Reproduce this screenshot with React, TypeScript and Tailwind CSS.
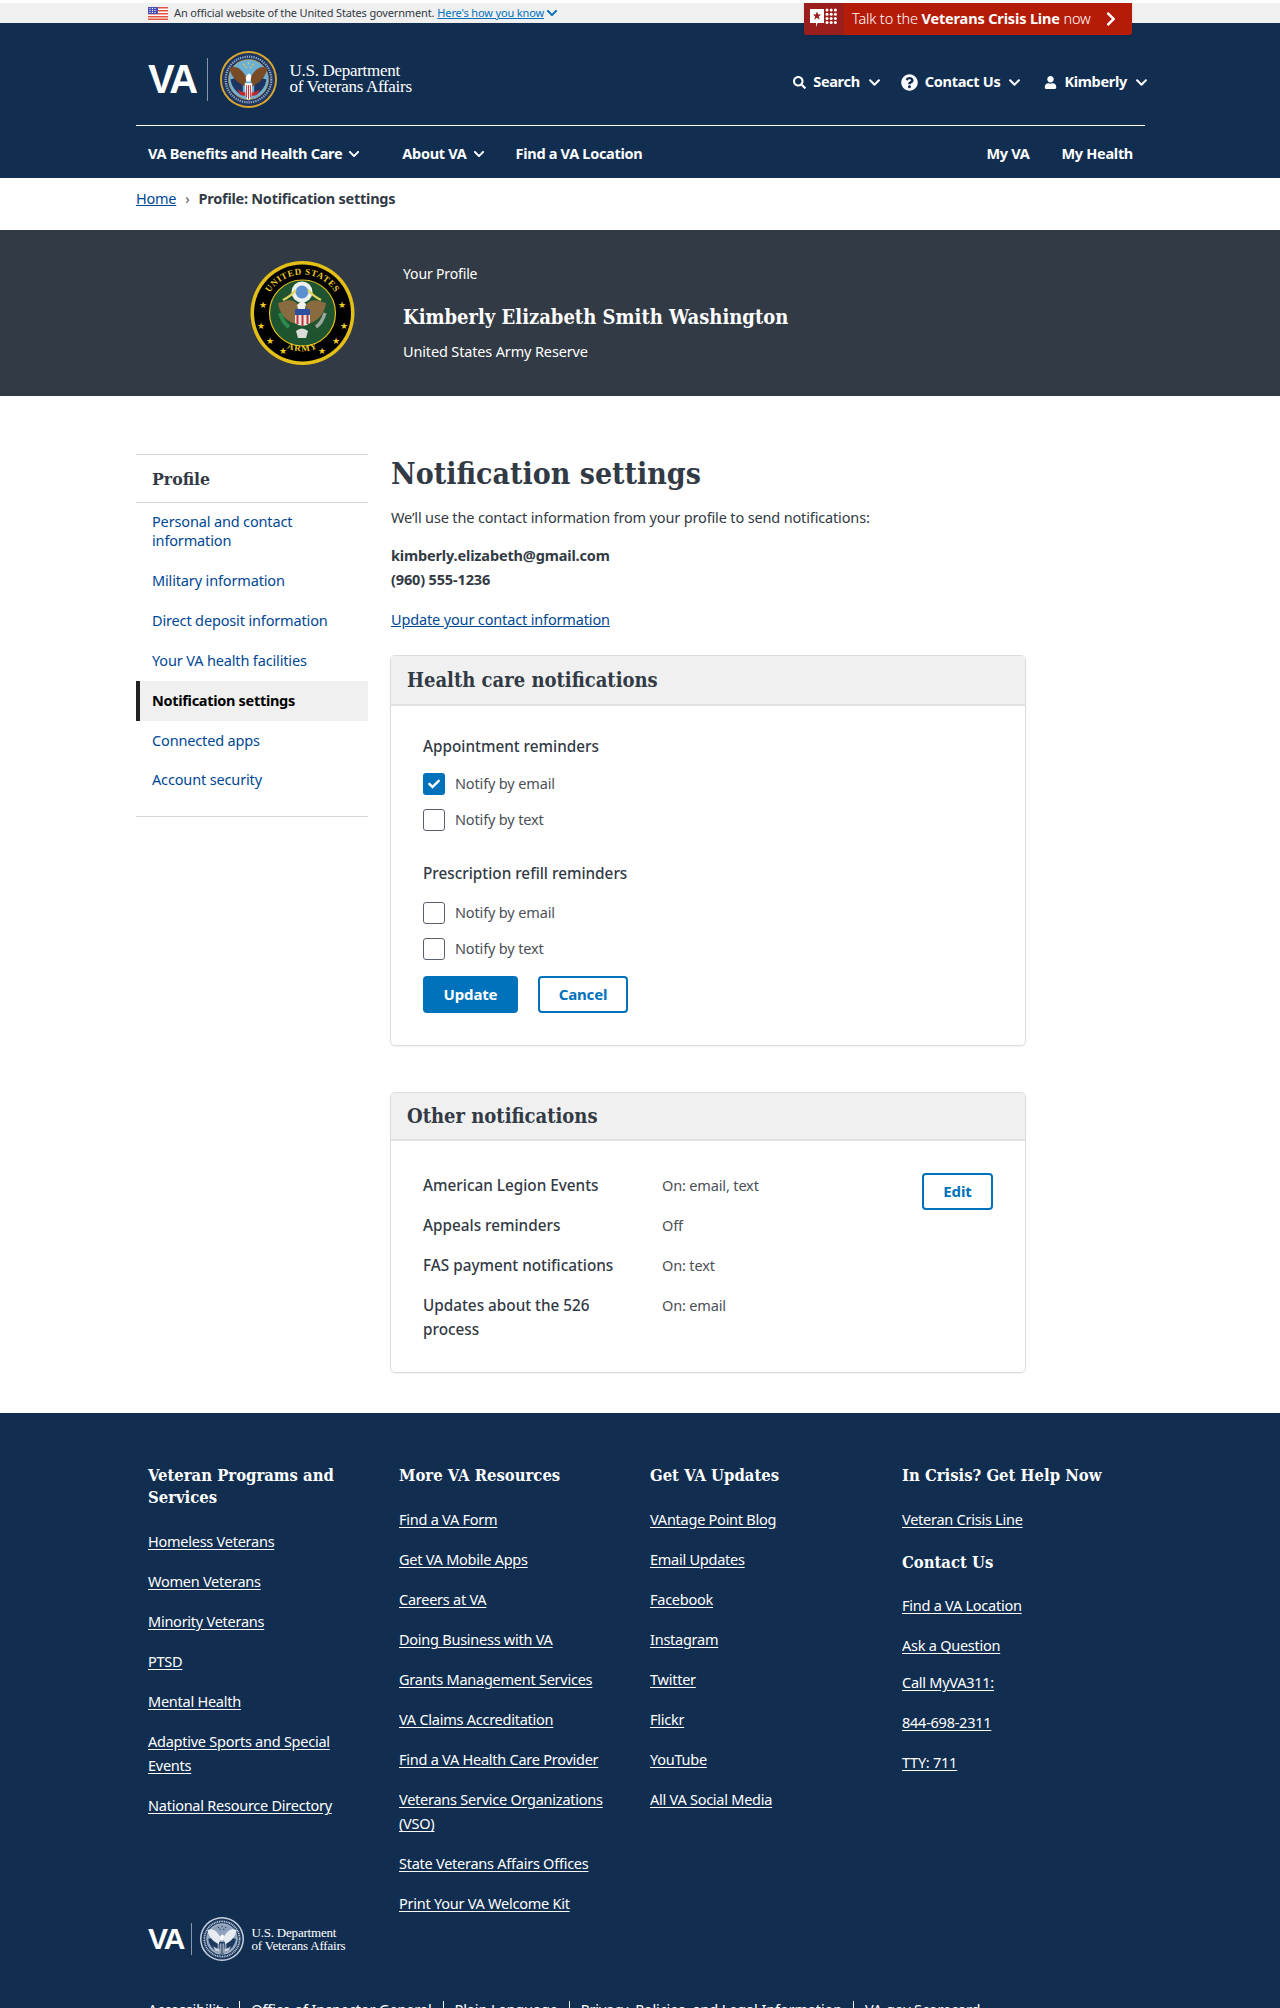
import React from 'react';
import { FaChevronDown, FaChevronRight, FaSearch, FaQuestionCircle, FaUser, FaCheck } from 'react-icons/fa';

const serif = "font-['DejaVu_Serif_Condensed','DejaVu_Serif',serif]";

const Flag = () => (
  <svg width="20" height="13" viewBox="0 0 20 13" className="shrink-0">
    <rect width="20" height="13" fill="#fff" />
    <rect y="0" width="20" height="1.5" fill="#e2563f" />
    <rect y="3" width="20" height="1.5" fill="#e2563f" />
    <rect y="6" width="20" height="1.5" fill="#e2563f" />
    <rect y="9" width="20" height="1.5" fill="#e2563f" />
    <rect y="11.5" width="20" height="1.5" fill="#e2563f" />
    <rect width="10" height="7" fill="#4a4fb5" />
    <path d="M1.5 1.5h1M4 1.5h1M6.5 1.5h1M1.5 3.5h1M4 3.5h1M6.5 3.5h1M1.5 5.5h1M4 5.5h1M6.5 5.5h1" stroke="#fff" strokeWidth="1" />
  </svg>
);

const VaSeal = ({ size, mono }: { size: number; mono?: boolean }) => {
  const c = mono
    ? { ring: '#c9d1dc', dark: '#1c3a60', mid: '#8fa2ba', wing: '#e6ebf1', head: '#ffffff', red: '#c9d1dc', shield: '#1c3a60' }
    : { ring: '#d9a62e', dark: '#1d3560', mid: '#6cb0d6', wing: '#7a4a24', head: '#ffffff', red: '#c2272d', shield: '#ffffff' };
  return (
    <svg width={size} height={size} viewBox="0 0 60 60" className="shrink-0">
      <circle cx="30" cy="30" r="30" fill={c.ring} />
      <circle cx="30" cy="30" r="28" fill={c.dark} />
      <circle cx="30" cy="30" r="24" fill="none" stroke={mono ? c.ring : '#8ea3bd'} strokeWidth="2.4" strokeDasharray="1.4 1" />
      <circle cx="30" cy="30" r="21" fill={c.mid} stroke={c.ring} strokeWidth="0.7" />
      <path d="M11 30 L24 26 L24 47 Q13 42 11 30Z M49 30 L36 26 L36 47 Q47 42 49 30Z" fill={c.dark} />
      <path d="M28 28 C22 17 16 15 10 18 C12 27 17 33 26 37Z M32 28 C38 17 44 15 50 18 C48 27 43 33 34 37Z" fill={c.wing} />
      <path d="M27 28 q3-7 6-2 l-1 6h-4z" fill={c.head} />
      <path d="M18 40 q6 5 12 3 q6 2 12-3 l-3 6 q-9 3-18 0z" fill={c.red} />
      <path d="M26 34h8l-1 13q-1 4-3 5q-2-1-3-5z" fill={c.shield} />
      <path d="M28 36v13M30 36v15M32 36v13" stroke={c.red} strokeWidth="1" />
      <path d="M25 13l1 1.8-1 .6-1-.6zM35 13l1 1.8-1 .6-1-.6zM30 11.5l1 1.8-1 .6-1-.6zM27.5 15.5l1 1.8-1 .6-1-.6zM32.5 15.5l1 1.8-1 .6-1-.6z" fill={mono ? c.dark : '#f1c644'} />
    </svg>
  );
};

const ArmySeal = () => {
  const stars: [number, number][] = [[-36, -8], [-38, 12], [-30, 26], [-18, 36], [18, 36], [30, 26], [38, 12], [36, -8]];
  return (
    <svg width="105" height="104" viewBox="0 0 105 104" className="shrink-0">
      <circle cx="52.5" cy="52" r="52" fill="#e3bf17" />
      <circle cx="52.5" cy="52" r="48.5" fill="#000" />
      <circle cx="52.5" cy="52" r="33" fill="#1e5530" stroke="#e3bf17" strokeWidth="1.2" />
      {stars.map(([x, y], i) => (
        <text key={i} x={52.5 + x * 1.1} y={55 + y * 1.06} fontSize="9" fill="#f0cc20" textAnchor="middle">★</text>
      ))}
      <defs>
        <path id="armyTop" d="M14 52 A38.5 38.5 0 0 1 91 52" />
        <path id="armyBot" d="M18 70 A39.5 39.5 0 0 0 87 70" />
      </defs>
      <text fontSize="9" fontWeight="700" fill="#e8c92a" fontFamily="Liberation Serif, serif" letterSpacing="0.6">
        <textPath href="#armyTop" startOffset="50%" textAnchor="middle">UNITED STATES</textPath>
      </text>
      <text fontSize="9" fontWeight="700" fill="#e8c92a" fontFamily="Liberation Serif, serif" letterSpacing="1">
        <textPath href="#armyBot" startOffset="50%" textAnchor="middle">ARMY</textPath>
      </text>
      <circle cx="52" cy="31" r="10.5" fill="#eef0ee" />
      <circle cx="52" cy="31" r="6.5" fill="#5a8fd0" />
      <path d="M48 44 C42 36 35 40 28 42 C29 50 34 60 46 63Z M56 44 C62 36 69 40 76 42 C75 50 70 60 58 63Z" fill="#8a6a3f" />
      <path d="M33 39 q8-4 13-10M71 39 q-8-4-13-10" stroke="#e3d35a" strokeWidth="2.2" fill="none" />
      <path d="M47 44 q5-6 9-1 l-1 5h-7z" fill="#f3f3ee" />
      <path d="M45 48h15v14q-7 6-15 0z" fill="#e9e6e0" />
      <rect x="45" y="48" width="15" height="6" fill="#2c4fa0" />
      <path d="M47.5 54v9M52.5 54v11M57.5 54v9" stroke="#c2303a" strokeWidth="2" />
      <path d="M30 52 q3 10 9 14" stroke="#2f8a4e" strokeWidth="4" fill="none" />
      <path d="M75 52 q-3 10-9 14" stroke="#9aa69a" strokeWidth="3.5" fill="none" />
      <path d="M46 70 q6-5 12 0 l-2 7h-8z" fill="#dcdcd6" />
    </svg>
  );
};

const CrisisIcon = () => (
  <svg width="29" height="26" viewBox="0 0 29 26">
    <path d="M0 3h14v14H7.5L6 21v-4H0z" fill="#fff" />
    <path d="M7 5.5l1.2 3h3l-2.4 2 .9 3.2L7 11.8l-2.7 1.9.9-3.2-2.4-2h3z" fill="#9a1f1c" />
    {[0, 1, 2, 3].map(r => [0, 1, 2].map(k => (
      <circle key={`${r}${k}`} cx={17 + k * 4.2} cy={4 + r * 4.2} r="1.5" fill="#fff" />
    )))}
  </svg>
);

const HeaderTool = ({ icon, label, className }: { icon: React.ReactNode; label: string; className?: string }) => (
  <div className={`flex items-center text-white font-bold tracking-[-0.3px] ${className ?? ''}`}>
    {icon}
    <span className="ml-[7px]">{label}</span>
    <FaChevronDown size={13} className="ml-[8px]" />
  </div>
);

const sideLinks = ['Personal and contact information', 'Military information', 'Direct deposit information', 'Your VA health facilities'];

const Check2 = ({ checked, label }: { checked?: boolean; label: string }) => (
  <div className="flex items-center h-[22px] text-[#4a4f57]">
    {checked ? (
      <span className="w-[22px] h-[22px] rounded-[3px] bg-[#0071bb] flex items-center justify-center">
        <FaCheck size={12} className="text-white" />
      </span>
    ) : (
      <span className="w-[22px] h-[22px] rounded-[3px] border border-[#5b616b] bg-white" />
    )}
    <span className="ml-[10px]">{label}</span>
  </div>
);

const Card = ({ title, children, className, headClass }: { title: string; children: React.ReactNode; className: string; headClass: string }) => (
  <section className={`-ml-px w-[636px] rounded-[5px] border border-[#dcdcdc] shadow-[0_1px_2px_rgba(0,0,0,0.06)] ${className}`}>
    <h2 className={`${serif} ${headClass} flex items-center px-[16px] rounded-t-[5px] bg-[#f0f0f0] border-b-2 border-[#e2e2e2] text-[20px] font-bold text-[#323a45] tracking-normal`}>{title}</h2>
    {children}
  </section>
);

const otherRows = [
  ['American Legion Events', 'On: email, text'],
  ['Appeals reminders', 'Off'],
  ['FAS payment notifications', 'On: text'],
  ['Updates about the 526\nprocess', 'On: email'],
];

const footerCols: { title: string; links: string[] }[] = [
  {
    title: 'Veteran Programs and Services',
    links: ['Homeless Veterans', 'Women Veterans', 'Minority Veterans', 'PTSD', 'Mental Health', 'Adaptive Sports and Special Events', 'National Resource Directory'],
  },
  {
    title: 'More VA Resources',
    links: ['Find a VA Form', 'Get VA Mobile Apps', 'Careers at VA', 'Doing Business with VA', 'Grants Management Services', 'VA Claims Accreditation', 'Find a VA Health Care Provider', 'Veterans Service Organizations (VSO)', 'State Veterans Affairs Offices', 'Print Your VA Welcome Kit'],
  },
  {
    title: 'Get VA Updates',
    links: ['VAntage Point Blog', 'Email Updates', 'Facebook', 'Instagram', 'Twitter', 'Flickr', 'YouTube', 'All VA Social Media'],
  },
];

const FootLink = ({ text }: { text: string }) => (
  <li className="leading-6"><a className="underline underline-offset-2 text-white">{text}</a></li>
);

const App: React.FC = () => {
  return (
    <div className="relative h-[2008px] overflow-hidden bg-white font-['Noto_Sans',sans-serif] text-[14.5px] text-[#323a45] tracking-[-0.15px]">
      {/* gov banner */}
      <div className="mt-[3px] h-[20px] bg-[#f0f0f0] pl-[148px] flex items-center text-[11px] tracking-[-0.15px] text-[#323a45]">
        <Flag />
        <span className="ml-[6px]">An official website of the United States government.</span>
        <a className="ml-[3px] underline text-[#0071bb]">Here's how you know</a>
        <FaChevronDown size={12} className="ml-[2px] text-[#0071bb]" />
      </div>

      {/* crisis line */}
      <div className="absolute left-[804px] top-[3px] w-[328px] h-[32px] rounded-b-[3px] bg-[#b51c08] flex items-center text-white shadow-sm">
        <span className="w-[40px] h-full rounded-bl-[3px] bg-[#9a1f1c] flex items-center justify-center"><CrisisIcon /></span>
        <span className="ml-[8px] font-light whitespace-nowrap">Talk to the <b className="font-bold">Veterans Crisis Line</b> now</span>
        <FaChevronRight size={16} className="ml-auto mr-[13px]" />
      </div>

      {/* header */}
      <header className="bg-[#112e51] h-[155px] pl-[136px] pr-[135px]">
        <div className="h-[103px] border-b border-white pl-[12px] pt-[10px] flex items-center justify-between">
          <div className="flex items-center">
            <span className="text-[40px] font-['Liberation_Sans',sans-serif] font-bold text-white tracking-[-2.5px] leading-none">VA</span>
            <span className="ml-[11px] w-px h-[43px] bg-white/50" />
            <span className="ml-[12px]"><VaSeal size={57} /></span>
            <span className="ml-[13px] font-['Liberation_Serif',serif] text-[17px] leading-[16px] text-white tracking-[-0.3px]">U.S. Department<br />of Veterans Affairs</span>
          </div>
          <div className="flex items-center gap-[20px] -mr-[3px] mt-[6px]">
            <HeaderTool icon={<FaSearch size={13} />} label="Search" />
            <HeaderTool icon={<FaQuestionCircle size={17} />} label="Contact Us" />
            <HeaderTool icon={<FaUser size={13} />} label="Kimberly" className="ml-[3px]" />
          </div>
        </div>
        <nav className="h-[51px] pl-[12px] pr-[12px] pt-[5px] flex items-center text-white font-bold tracking-[-0.3px]">
          <span className="flex items-center">VA Benefits and Health Care<FaChevronDown size={12} className="ml-[6px]" /></span>
          <span className="ml-[42px] flex items-center">About VA<FaChevronDown size={12} className="ml-[6px]" /></span>
          <span className="ml-[31px]">Find a VA Location</span>
          <span className="ml-auto">My VA</span>
          <span className="ml-[32px]">My Health</span>
        </nav>
      </header>

      {/* breadcrumb */}
      <div className="h-[52px] pl-[136px] flex items-center pb-[10px] tracking-[-0.25px]">
        <a className="underline text-[#004795]">Home</a>
        <span className="mx-[9px] text-[#5b616b]">›</span>
        <span className="font-bold">Profile: Notification settings</span>
      </div>

      {/* profile banner */}
      <div className="h-[166px] bg-[#323a45] pl-[250px] flex items-center text-white">
        <ArmySeal />
        <div className="ml-[48px]">
          <p className="text-[14px] leading-6 -mt-[2px]">Your Profile</p>
          <h2 className={`${serif} mt-[13px] text-[20px] font-bold leading-[36px] tracking-normal`}>Kimberly Elizabeth Smith Washington</h2>
          <p className="mt-[4px] leading-6">United States Army Reserve</p>
        </div>
      </div>

      {/* content */}
      <div className="pl-[136px] pt-[58px] flex items-start">
        <aside className="w-[232px] shrink-0 border-t border-b border-[#d6d7d9] pb-[15px]">
          <h3 className={`${serif} h-[48px] pl-[16px] pt-[2px] flex items-center border-b border-[#d6d7d9] text-[17.5px] font-bold tracking-normal`}>Profile</h3>
          <ul className="text-[#004795]">
            {sideLinks.map(l => (
              <li key={l} className="px-[16px] min-h-[40px] pt-[9px] pb-[11px] flex items-center leading-[19px]">{l}</li>
            ))}
            <li className="h-[40px] border-l-4 border-[#212121] bg-[#f0f0f0] pl-[12px] flex items-center font-bold text-black tracking-[-0.3px]">Notification settings</li>
            <li className="px-[16px] h-[40px] flex items-center">Connected apps</li>
            <li className="px-[16px] h-[40px] pb-[2px] flex items-center">Account security</li>
          </ul>
        </aside>

        <main className="ml-[23px] w-[637px] shrink-0">
          <h1 className={`${serif} text-[30px] font-bold leading-[40px] tracking-normal`}>Notification settings</h1>
          <p className="mt-[11px] leading-6">We’ll use the contact information from your profile to send notifications:</p>
          <p className="mt-[14px] font-bold leading-6">kimberly.elizabeth@gmail.com</p>
          <p className="font-bold leading-6">(960) 555-1236</p>
          <a className="block mt-[16px] leading-6 underline text-[#004795]">Update your contact information</a>

          <Card title="Health care notifications" headClass="h-[50px]" className="mt-[24px] h-[391px]">
            <div className="pl-[32px] pt-[28px]">
              <h4 className="text-[15.3px] font-medium leading-6 tracking-normal">Appointment reminders</h4>
              <div className="mt-[15px] flex flex-col gap-[14px]">
                <Check2 checked label="Notify by email" />
                <Check2 label="Notify by text" />
              </div>
              <h4 className="mt-[30px] text-[15.3px] font-medium leading-6 tracking-normal">Prescription refill reminders</h4>
              <div className="mt-[17px] flex flex-col gap-[14px]">
                <Check2 label="Notify by email" />
                <Check2 label="Notify by text" />
              </div>
              <div className="mt-[16px] flex gap-[20px] font-bold text-[15px]">
                <button className="w-[95px] h-[37px] rounded-[4px] bg-[#0071bb] text-white">Update</button>
                <button className="w-[90px] h-[37px] rounded-[4px] border-2 border-[#0071bb] text-[#0071bb]">Cancel</button>
              </div>
            </div>
          </Card>

          <Card title="Other notifications" headClass="h-[48px]" className="relative mt-[46px] h-[281px]">
            <div className="pl-[32px] pt-[32px] w-[460px] flex flex-col gap-[16px]">
              {otherRows.map(([k, v]) => (
                <div key={k} className="flex leading-6">
                  <span className="w-[239px] whitespace-pre-line text-[15.3px] font-medium tracking-normal">{k}</span>
                  <span className="text-[#4a4f57]">{v}</span>
                </div>
              ))}
            </div>
            <button className="absolute right-[32px] top-[80px] w-[71px] h-[37px] rounded-[4px] border-2 border-[#0071bb] text-[#0071bb] font-bold text-[15px]">Edit</button>
          </Card>
        </main>
      </div>

      {/* footer */}
      <footer className="mt-[40px] h-[595px] bg-[#112e51] text-white pl-[148px] pt-[52px] tracking-[-0.25px]">
        <div className="grid grid-cols-[251px_251px_252px_251px] h-[452px]">
          {footerCols.map(col => (
            <div key={col.title} className="pr-[30px]">
              <h3 className={`${serif} text-[16.5px] font-bold leading-[22px] tracking-normal`}>{col.title}</h3>
              <ul className="mt-[20px] flex flex-col gap-[16px]">
                {col.links.map(l => <FootLink key={l} text={l} />)}
              </ul>
            </div>
          ))}
          <div>
            <h3 className={`${serif} text-[16.5px] font-bold leading-[22px] tracking-normal`}>In Crisis? Get Help Now</h3>
            <ul className="mt-[20px]"><FootLink text="Veteran Crisis Line" /></ul>
            <h3 className={`${serif} mt-[21px] text-[16.5px] font-bold leading-[22px] tracking-normal`}>Contact Us</h3>
            <ul className="mt-[19px] flex flex-col gap-[16px]">
              <FootLink text="Find a VA Location" />
              <FootLink text="Ask a Question" />
            </ul>
            <ul className="mt-[13px] flex flex-col gap-[16px]">
              <FootLink text="Call MyVA311:" />
              <FootLink text="844-698-2311" />
              <FootLink text="TTY: 711" />
            </ul>
          </div>
        </div>
        <div className="flex items-center">
          <span className="text-[30px] font-['Liberation_Sans',sans-serif] font-bold tracking-[-2px] leading-none">VA</span>
          <span className="ml-[8px] w-px h-[32px] bg-white/50" />
          <span className="ml-[8px]"><VaSeal size={44} mono /></span>
          <span className="ml-[7px] font-['Liberation_Serif',serif] text-[13px] leading-[13px] tracking-[-0.2px]">U.S. Department<br />of Veterans Affairs</span>
        </div>
        <div className="mt-[38px] flex items-center leading-5 whitespace-nowrap tracking-[-0.12px]">
          <span>Accessibility</span><span className="mx-[11px] w-px h-[16px] bg-white" />
          <span>Office of Inspector General</span><span className="mx-[11px] w-px h-[16px] bg-white" />
          <span>Plain Language</span><span className="mx-[11px] w-px h-[16px] bg-white" />
          <span>Privacy, Policies, and Legal Information</span><span className="mx-[11px] w-px h-[16px] bg-white" />
          <span>VA.gov Scorecard</span>
        </div>
      </footer>
    </div>
  );
};

export default App;
